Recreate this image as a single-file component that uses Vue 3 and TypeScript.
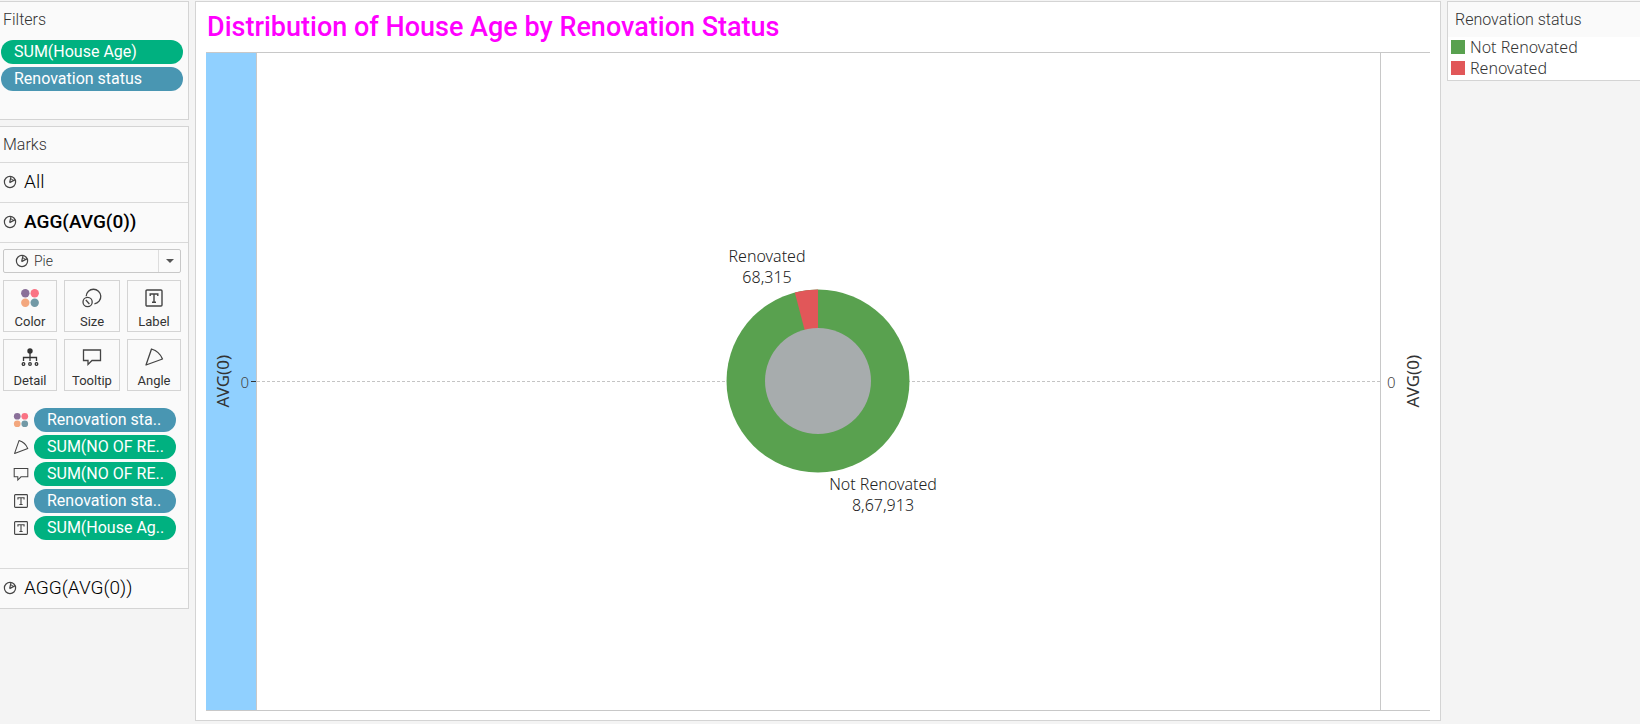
<script setup lang="ts">
import { ref } from 'vue'

type IconName = 'color' | 'size' | 'label' | 'detail' | 'tooltip' | 'angle'

interface Pill {
  icon?: IconName
  text: string
  kind: 'measure' | 'dimension'
}

const filters: Pill[] = [
  { text: 'SUM(House Age)', kind: 'measure' },
  { text: 'Renovation status', kind: 'dimension' },
]

const properties: { icon: IconName; text: string }[] = [
  { icon: 'color', text: 'Color' },
  { icon: 'size', text: 'Size' },
  { icon: 'label', text: 'Label' },
  { icon: 'detail', text: 'Detail' },
  { icon: 'tooltip', text: 'Tooltip' },
  { icon: 'angle', text: 'Angle' },
]

const encodings: Pill[] = [
  { icon: 'color', text: 'Renovation sta..', kind: 'dimension' },
  { icon: 'angle', text: 'SUM(NO OF RE..', kind: 'measure' },
  { icon: 'tooltip', text: 'SUM(NO OF RE..', kind: 'measure' },
  { icon: 'label', text: 'Renovation sta..', kind: 'dimension' },
  { icon: 'label', text: 'SUM(House Ag..', kind: 'measure' },
]

const legend = [
  { text: 'Not Renovated', tone: 'green' },
  { text: 'Renovated', tone: 'red' },
]

const markType = ref('Pie')
</script>

<template>
  <svg class="symbols" aria-hidden="true">
    <symbol id="i-pie" viewBox="0 0 14 14">
      <g fill="none" stroke="#444" stroke-width="1.2">
        <circle cx="7" cy="7" r="5.6" />
        <path d="M6.6 7.6 8 1.6M6.6 7.6l5.6-3" />
        <path d="M7.6 3.6 10.5 5.4" stroke-width="1" />
      </g>
    </symbol>
    <symbol id="i-color" viewBox="0 0 20 20">
      <circle cx="5.3" cy="5.3" r="4.2" fill="#8a7099" />
      <circle cx="14.7" cy="5.3" r="4.2" fill="#fa7384" />
      <circle cx="5.3" cy="14.7" r="4.2" fill="#f3a77e" />
      <circle cx="14.7" cy="14.7" r="4.2" fill="#7299a6" />
    </symbol>
    <symbol id="i-size" viewBox="0 0 20 20">
      <g fill="none" stroke="#444" stroke-width="1.3">
        <path d="M4.2 8.2a7.3 7.3 0 1 1 8.2 7.6" />
        <circle cx="5.6" cy="14" r="4.6" />
        <path d="m3.8 12 3.6 4" />
      </g>
    </symbol>
    <symbol id="i-label" viewBox="0 0 20 20">
      <g fill="none" stroke="#444" stroke-width="1.4">
        <rect x="2" y="2" width="16" height="16" rx="1" />
        <path d="M6.2 8V6h7.6v2M10 6v8.3M8 14.3h4" />
      </g>
    </symbol>
    <symbol id="i-detail" viewBox="0 0 20 20">
      <circle cx="10" cy="4" r="2.7" fill="#333" />
      <g fill="none" stroke="#333" stroke-width="1.3">
        <path d="M10 5v9M3.5 14v-3.5h13V14" />
        <circle cx="3.5" cy="17" r="1.3" />
        <circle cx="10" cy="17" r="1.3" />
        <circle cx="16.5" cy="17" r="1.3" />
      </g>
    </symbol>
    <symbol id="i-tooltip" viewBox="0 0 20 20">
      <path d="M1.5 3h17v10.5H10L6 17.5v-4H1.5z" fill="none" stroke="#444" stroke-width="1.3" />
    </symbol>
    <symbol id="i-angle" viewBox="0 0 20 20">
      <path d="M7.5 2 2 18l16.5-6Q15.5 4.5 7.5 2z" fill="none" stroke="#444" stroke-width="1.3" stroke-linejoin="round" />
    </symbol>
  </svg>

  <div class="workspace">
    <aside class="sidebar">
      <section class="panel filters">
        <h2 class="panel-title">Filters</h2>
        <div class="filter-list">
          <button v-for="f in filters" :key="f.text" type="button" class="pill" :class="f.kind">{{ f.text }}</button>
        </div>
      </section>

      <section class="panel marks">
        <h2 class="panel-title">Marks</h2>
        <button type="button" class="mark-row">
          <svg class="pie-icon"><use href="#i-pie" /></svg>All
        </button>
        <button type="button" class="mark-row active">
          <svg class="pie-icon"><use href="#i-pie" /></svg>AGG(AVG(0))
        </button>
        <div class="mark-card">
          <div class="mark-type">
            <svg class="pie-icon"><use href="#i-pie" /></svg>
            <select v-model="markType" aria-label="Mark type">
              <option>Pie</option>
            </select>
            <span class="arrow" aria-hidden="true"></span>
          </div>
          <div class="properties">
            <button v-for="p in properties" :key="p.text" type="button" class="property">
              <svg class="property-icon"><use :href="`#i-${p.icon}`" /></svg>
              {{ p.text }}
            </button>
          </div>
          <ul class="encodings">
            <li v-for="(e, i) in encodings" :key="i">
              <svg class="encoding-icon"><use :href="`#i-${e.icon}`" /></svg>
              <button type="button" class="pill" :class="e.kind">{{ e.text }}</button>
            </li>
          </ul>
        </div>
        <button type="button" class="mark-row">
          <svg class="pie-icon"><use href="#i-pie" /></svg>AGG(AVG(0))
        </button>
      </section>
    </aside>

    <main class="sheet">
      <h1>Distribution of House Age by Renovation Status</h1>
      <div class="view">
        <div class="axis left">
          <span class="axis-title">AVG(0)</span>
          <span class="tick">0</span>
          <span class="tick-mark"></span>
        </div>
        <div class="pane">
          <span class="zero-line"></span>
          <svg class="donut" viewBox="-92 -92 184 184" role="img" aria-label="House age by renovation status">
            <circle r="91.5" fill="#59a14f" />
            <path d="M0 0V-91.5A91.5 91.5 0 0 0-23.2-88.5Z" fill="#e15759" />
            <circle r="53" fill="#a7acad" />
            <g class="mark-label">
              <text x="-51" y="-119">Renovated</text>
              <text x="-51" y="-98">68,315</text>
              <text x="65" y="109">Not Renovated</text>
              <text x="65" y="130">8,67,913</text>
            </g>
          </svg>
        </div>
        <div class="axis right">
          <span class="tick">0</span>
          <span class="axis-title">AVG(0)</span>
        </div>
      </div>
    </main>

    <aside class="legend">
      <h2>Renovation status</h2>
      <ul>
        <li v-for="l in legend" :key="l.text">
          <span class="swatch" :class="l.tone"></span>{{ l.text }}
        </li>
      </ul>
    </aside>
  </div>
</template>

<style>
body {
  background: #f4f4f4;
}
</style>

<style scoped>
* {
  box-sizing: border-box;
}
h1,
h2,
ul {
  margin: 0;
  padding: 0;
  list-style: none;
}
button,
select {
  margin: 0;
  padding: 0;
  border: 0;
  background: none;
  font: inherit;
  color: inherit;
  text-align: left;
}
.symbols {
  display: none;
}
.workspace {
  display: grid;
  grid-template-columns: 189px minmax(0, 1fr) 193px;
  gap: 6px;
  min-height: 100vh;
  padding: 1px 0 3px;
  font-family: Roboto, "Liberation Sans", sans-serif;
  font-size: 16px;
  color: #333;
}
.sidebar {
  display: flex;
  flex-direction: column;
  gap: 6px;
}
.panel {
  border: 1px solid #d4d4d4;
  border-left: 0;
  background: #fafafa;
}
.panel-title {
  padding-left: 3px;
  font-size: 16px;
  font-weight: 300;
  line-height: 35px;
}
.filters {
  height: 119px;
}
.filter-list {
  display: flex;
  flex-direction: column;
  gap: 3px;
  padding: 3px 5px 0 1px;
}
.pill {
  display: block;
  width: 100%;
  height: 24px;
  padding-left: 13px;
  border-radius: 12px;
  color: #fff;
  line-height: 24px;
  white-space: nowrap;
}
.measure {
  background: #00b180;
}
.dimension {
  background: #4996b2;
}
.mark-row {
  display: flex;
  align-items: center;
  gap: 7px;
  width: 100%;
  height: 40px;
  padding: 0 0 2px 3px;
  border-top: 1px solid #d9d9d9;
  color: #000;
  font-size: 19px;
  font-weight: 300;
}
.mark-row.active {
  font-weight: 500;
}
.pie-icon {
  flex: none;
  width: 14px;
  height: 14px;
}
.mark-card {
  padding: 6px 7px 28px 3px;
  border-top: 1px solid #d9d9d9;
}
.mark-type {
  display: flex;
  align-items: center;
  height: 24px;
  padding-left: 11px;
  border: 1px solid #c8c8c8;
  border-radius: 2px;
}
.mark-type select {
  flex: 1;
  min-width: 0;
  padding-left: 5px;
  appearance: none;
  font-size: 14px;
  font-weight: 300;
}
.arrow {
  display: grid;
  place-items: center;
  width: 22px;
  height: 22px;
  border-left: 1px solid #ddd;
}
.arrow::after {
  content: "";
  border: 4px solid transparent;
  border-top-color: #555;
  border-bottom: 0;
}
.properties {
  display: grid;
  grid-template-columns: 54px 56px 54px;
  justify-content: space-between;
  gap: 7px 0;
  margin-top: 7px;
}
.property {
  display: flex;
  flex-direction: column;
  align-items: center;
  justify-content: space-between;
  height: 52px;
  padding: 7px 0 2px;
  border: 1px solid #d4d4d4;
  font-size: 13px;
  line-height: 14px;
}
.property-icon {
  width: 20px;
  height: 20px;
}
.encodings {
  display: flex;
  flex-direction: column;
  gap: 3px;
  margin-top: 17px;
  padding: 0 5px 0 10px;
}
.encodings li {
  display: flex;
  align-items: center;
  gap: 5px;
}
.encoding-icon {
  flex: none;
  width: 16px;
  height: 16px;
}
.sheet {
  display: flex;
  flex-direction: column;
  padding: 0 10px 9px;
  border: 1px solid #d4d4d4;
  background: #fff;
}
h1 {
  padding-left: 1px;
  color: #f0f;
  font-size: 27px;
  font-weight: 500;
  line-height: 50px;
}
.view {
  flex: 1;
  display: grid;
  grid-template-columns: 51px minmax(0, 1fr) 50px;
  border: solid #c8c8c8;
  border-width: 1px 0;
  font-family: "Noto Sans", "Open Sans", sans-serif;
}
.axis {
  display: flex;
  align-items: center;
}
.left {
  justify-content: flex-end;
  border-right: 1px solid #c8c8c8;
  background: #90d0ff;
}
.right {
  padding-left: 6px;
  border-left: 1px solid #c8c8c8;
}
.axis-title {
  writing-mode: vertical-rl;
  transform: rotate(180deg);
  font-size: 17px;
  line-height: 20px;
}
.left .axis-title {
  margin-right: 7px;
}
.right .axis-title {
  margin-left: 7px;
}
.tick {
  font-size: 15px;
  font-weight: 300;
  color: #444;
}
.tick-mark {
  width: 5px;
  height: 1px;
  margin-left: 2px;
  background: #333;
}
.pane {
  position: relative;
  display: grid;
  place-items: center;
  padding: 0 1px 1px 0;
}
.zero-line {
  position: absolute;
  inset: 50% 0 auto;
  margin-top: -1px;
  border-top: 1px dashed #c4c4c4;
}
.donut {
  position: relative;
  width: 184px;
  height: 184px;
  overflow: visible;
}
.mark-label {
  fill: #222;
  font-size: 16px;
  font-weight: 300;
  text-anchor: middle;
}
.legend {
  align-self: start;
  padding-bottom: 2px;
  border: 1px solid #d4d4d4;
  border-right: 0;
  background: #fff;
}
.legend h2 {
  padding-left: 7px;
  background: #fafafa;
  font-size: 16px;
  font-weight: 300;
  line-height: 35px;
}
.legend ul {
  display: grid;
  gap: 1px;
}
.legend li {
  display: flex;
  align-items: center;
  gap: 5px;
  height: 20px;
  padding-left: 3px;
  font-family: "Noto Sans", "Open Sans", sans-serif;
  font-size: 16px;
  font-weight: 300;
}
.swatch {
  width: 14px;
  height: 14px;
}
.green {
  background: #59a14f;
}
.red {
  background: #e15759;
}
</style>
